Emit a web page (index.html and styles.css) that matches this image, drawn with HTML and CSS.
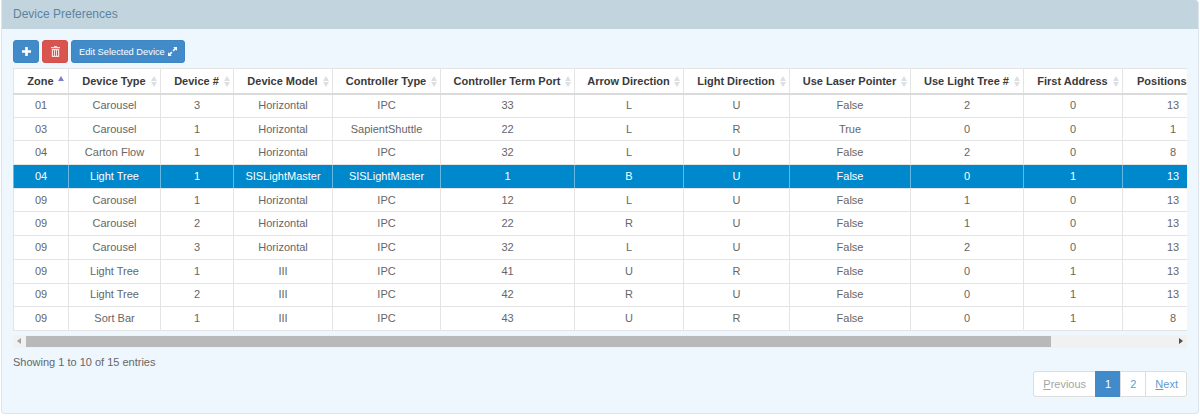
FILE: index.html
```html
<!DOCTYPE html>
<html lang="en">
<head>
    <meta charset="UTF-8">
    <meta name="viewport" content="width=device-width, initial-scale=1.0">
    <title>Device Preferences</title>
    <link rel="stylesheet" href="styles.css">
</head>
<body>
    <div class="panel">
        <div class="panel-heading">Device Preferences</div>
        <div class="panel-body">
            <div class="toolbar">
                <button class="btn btn-blue btn-icon" type="button">
                    <svg width="9" height="9" viewBox="0 0 9 9"><path fill="#fff" d="M3.200 0h2.600v3.200H9v2.600H5.800V9H3.200V5.800H0V3.200h3.200z"/></svg>
                </button>
                <button class="btn btn-red btn-icon" type="button">
                    <svg width="9" height="11" viewBox="0 0 9 11"><path fill="#fbdcdc" fill-rule="evenodd" d="M3.200 0h2.600l.5 1H9v1.200H0V1h2.700zM.8 3h7.400v8H.8zM2 4.200v5.600h1V4.200zM4 4.200v5.600h1V4.200zM6 4.200v5.600h1V4.200z"/></svg>
                </button>
                <button class="btn btn-blue" type="button">Edit Selected Device
                    <svg width="9" height="9" viewBox="0 0 10 10"><path fill="#fff" d="M5.800 0H10v4.200L8.500 2.700 6.300 4.900 5.100 3.700 7.300 1.500zM0 10V5.800l1.500 1.500 2.200-2.200 1.200 1.200-2.200 2.200L4.200 10z"/></svg>
                </button>
            </div>

            <div class="table-wrap">
                <table class="device-table">
                    <colgroup>
                        <col class="c-zone"><col class="c-type"><col class="c-num"><col class="c-model"><col class="c-ctrl"><col class="c-port">
                        <col class="c-arrow"><col class="c-light"><col class="c-laser"><col class="c-tree"><col class="c-addr"><col class="c-pos">
                    </colgroup>
                    <thead>
                        <tr>
                            <th class="sort-asc">Zone</th>
                            <th>Device Type</th>
                            <th>Device #</th>
                            <th>Device Model</th>
                            <th>Controller Type</th>
                            <th>Controller Term Port</th>
                            <th>Arrow Direction</th>
                            <th>Light Direction</th>
                            <th>Use Laser Pointer</th>
                            <th>Use Light Tree #</th>
                            <th>First Address</th>
                            <th>Positions</th>
                        </tr>
                    </thead>
                    <tbody>
                        <tr><td>01</td><td>Carousel</td><td>3</td><td>Horizontal</td><td>IPC</td><td>33</td><td>L</td><td>U</td><td>False</td><td>2</td><td>0</td><td>13</td></tr>
                        <tr><td>03</td><td>Carousel</td><td>1</td><td>Horizontal</td><td>SapientShuttle</td><td>22</td><td>L</td><td>R</td><td>True</td><td>0</td><td>0</td><td>1</td></tr>
                        <tr><td>04</td><td>Carton Flow</td><td>1</td><td>Horizontal</td><td>IPC</td><td>32</td><td>L</td><td>U</td><td>False</td><td>2</td><td>0</td><td>8</td></tr>
                        <tr class="selected"><td>04</td><td>Light Tree</td><td>1</td><td>SISLightMaster</td><td>SISLightMaster</td><td>1</td><td>B</td><td>U</td><td>False</td><td>0</td><td>1</td><td>13</td></tr>
                        <tr><td>09</td><td>Carousel</td><td>1</td><td>Horizontal</td><td>IPC</td><td>12</td><td>L</td><td>U</td><td>False</td><td>1</td><td>0</td><td>13</td></tr>
                        <tr><td>09</td><td>Carousel</td><td>2</td><td>Horizontal</td><td>IPC</td><td>22</td><td>R</td><td>U</td><td>False</td><td>1</td><td>0</td><td>13</td></tr>
                        <tr><td>09</td><td>Carousel</td><td>3</td><td>Horizontal</td><td>IPC</td><td>32</td><td>L</td><td>U</td><td>False</td><td>2</td><td>0</td><td>13</td></tr>
                        <tr><td>09</td><td>Light Tree</td><td>1</td><td>III</td><td>IPC</td><td>41</td><td>U</td><td>R</td><td>False</td><td>0</td><td>1</td><td>13</td></tr>
                        <tr><td>09</td><td>Light Tree</td><td>2</td><td>III</td><td>IPC</td><td>42</td><td>R</td><td>U</td><td>False</td><td>0</td><td>1</td><td>13</td></tr>
                        <tr><td>09</td><td>Sort Bar</td><td>1</td><td>III</td><td>IPC</td><td>43</td><td>U</td><td>R</td><td>False</td><td>0</td><td>1</td><td>8</td></tr>
                    </tbody>
                </table>
            </div>

            <div class="scrollbar">
                <span class="arrow arrow-left"></span>
                <div class="scroll-track"><div class="scroll-thumb"></div></div>
                <span class="arrow arrow-right"></span>
            </div>

            <div class="table-info">Showing 1 to 10 of 15 entries</div>

            <div class="pager-row">
                <ul class="pagination">
                    <li class="disabled"><a href="#"><u>P</u>revious</a></li>
                    <li class="active"><a href="#">1</a></li>
                    <li><a href="#">2</a></li>
                    <li><a href="#"><u>N</u>ext</a></li>
                </ul>
            </div>
        </div>
    </div>
</body>
</html>
```

FILE: styles.css
```css
* {
    box-sizing: border-box;
}

body {
    margin: 0;
    background: #fff;
    font-family: "Liberation Sans", Arial, sans-serif;
    font-size: 11px;
    color: #666;
}

.panel {
    height: 414px;
    margin: 0 1px;
    background: #eef6fe;
    border: 1px solid #dde4ec;
    border-top: none;
    border-radius: 0 4px 4px 4px;
    overflow: hidden;
}

.panel-heading {
    height: 29px;
    padding: 6px 11px;
    background: #c2d4de;
    color: #5c84a2;
    font-size: 12px;
    line-height: 16px;
}

.panel-body {
    padding: 11px 11px 0 11px;
}

.toolbar {
    display: flex;
    gap: 3px;
    height: 23px;
}

.btn {
    display: flex;
    align-items: center;
    gap: 3px;
    height: 23px;
    padding: 0 7px 0 7px;
    border: 1px solid transparent;
    border-radius: 3px;
    color: #fff;
    font-family: inherit;
    font-size: 9.3px;
}

.btn-icon {
    width: 26px;
    justify-content: center;
    padding: 0;
}

.btn-blue {
    background: #428bca;
    border-color: #3f85c2;
}

.btn-red {
    background: #d9534f;
    border-color: #d4504c;
}

.table-wrap {
    margin-top: 5px;
    width: 1174px;
    overflow: hidden;
    background: #fff;
}

.device-table {
    width: 1210px;
    table-layout: fixed;
    border-collapse: collapse;
    background: #fff;
}

.c-zone { width: 55px; }
.c-type { width: 92px; }
.c-num { width: 73px; }
.c-model { width: 99px; }
.c-ctrl { width: 108px; }
.c-port { width: 134px; }
.c-arrow { width: 109px; }
.c-light { width: 106px; }
.c-laser { width: 121px; }
.c-tree { width: 113px; }
.c-addr { width: 99px; }
.c-pos { width: 101px; }

.device-table th,
.device-table td {
    border: 1px solid #e4e4e4;
    text-align: center;
    white-space: nowrap;
    overflow: hidden;
}

.device-table th {
    position: relative;
    height: 25px;
    padding: 0 5px 0 4px;
    border-bottom: 2px solid #dadada;
    color: #3a3a3a;
    font-size: 11px;
    font-weight: bold;
}

.device-table th:last-child {
    text-align: left;
    padding-left: 14px;
}

/* sort arrows */
.device-table th::before,
.device-table th::after {
    content: "";
    position: absolute;
    right: 3px;
    border-left: 3px solid transparent;
    border-right: 3px solid transparent;
}

.device-table th::before {
    top: 7px;
    border-bottom: 5px solid #dcdfe3;
}

.device-table th::after {
    top: 13px;
    border-top: 5px solid #dcdfe3;
}

.device-table th.sort-asc::before {
    right: 4px;
    border-bottom-color: #7c7cdc;
}

.device-table th.sort-asc::after {
    display: none;
}

.device-table td {
    height: 23.7px;
    padding: 0 4px;
    line-height: 15px;
}

.device-table tr.selected td {
    background: #0088cc;
    border-left-color: #66b8e0;
    border-right-color: #66b8e0;
    border-top-color: #c4cfd6;
    color: #fff;
}

.scrollbar {
    display: flex;
    align-items: center;
    width: 1174px;
    height: 13px;
    margin-top: 4px;
    background: #f1f1f1;
}

.scroll-track {
    flex: 1;
    height: 11px;
}

.scroll-thumb {
    width: 1025px;
    height: 11px;
    margin-left: 1px;
    background: #b9b9b9;
}

.arrow {
    width: 12px;
    display: flex;
    justify-content: center;
}

.arrow::before {
    content: "";
    border-top: 3px solid transparent;
    border-bottom: 3px solid transparent;
}

.arrow-left::before {
    border-right: 4px solid #a3a3a3;
}

.arrow-right::before {
    border-left: 4px solid #505050;
}

.table-info {
    margin-top: 6px;
    line-height: 16px;
}

.pager-row {
    display: flex;
    justify-content: flex-end;
    width: 1174px;
    margin-top: 1px;
}

.pagination {
    display: flex;
    margin: 0;
    padding: 0;
    list-style: none;
}

.pagination a {
    display: block;
    height: 26px;
    margin-left: -1px;
    padding: 0 9px;
    border: 1px solid #ddd;
    background: #fff;
    color: #5f9bd1;
    line-height: 24px;
    text-decoration: none;
}

.pagination li:first-child a {
    border-radius: 3px 0 0 3px;
}

.pagination li:last-child a {
    padding-right: 8px;
    border-radius: 0 3px 3px 0;
}

.pagination .disabled a {
    color: #a5a5a5;
}

.pagination .active a {
    background: #428bca;
    border-color: #428bca;
    color: #fff;
}
```
